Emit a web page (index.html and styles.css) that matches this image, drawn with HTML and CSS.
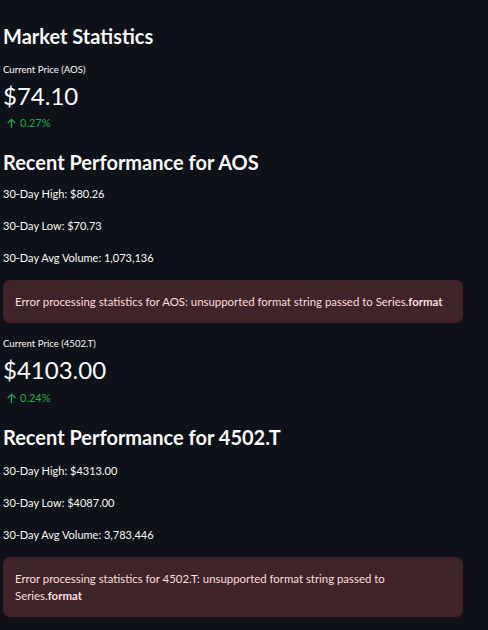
FILE: index.html
```html
<!DOCTYPE html>
<html>
<head>
<meta charset="utf-8">
<link rel="stylesheet" href="styles.css">
</head>
<body>
<main class="page">
  <h2 class="title">Market Statistics</h2>

  <section class="metric">
    <div class="metric-label">Current Price (AOS)</div>
    <div class="metric-value">$74.10</div>
    <div class="metric-delta"><svg class="arrow" viewBox="0 0 12 12" width="11" height="11"><path d="M6 11V1.5M1.8 5.6L6 1.4l4.2 4.2" fill="none" stroke="currentColor" stroke-width="1.4"/></svg><span>0.27%</span></div>
  </section>

  <h3 class="subtitle">Recent Performance for AOS</h3>
  <div class="stats">
    <p class="stat">30-Day High: $80.26</p>
    <p class="stat">30-Day Low: $70.73</p>
    <p class="stat">30-Day Avg Volume: 1,073,136</p>
  </div>

  <div class="alert">Error processing statistics for AOS: unsupported format string passed to <span class="nowrap">Series.<strong>format</strong></span></div>

  <section class="metric metric-after">
    <div class="metric-label">Current Price (4502.T)</div>
    <div class="metric-value">$4103.00</div>
    <div class="metric-delta"><svg class="arrow" viewBox="0 0 12 12" width="11" height="11"><path d="M6 11V1.5M1.8 5.6L6 1.4l4.2 4.2" fill="none" stroke="currentColor" stroke-width="1.4"/></svg><span>0.24%</span></div>
  </section>

  <h3 class="subtitle">Recent Performance for 4502.T</h3>
  <div class="stats stats-after">
    <p class="stat">30-Day High: $4313.00</p>
    <p class="stat">30-Day Low: $4087.00</p>
    <p class="stat">30-Day Avg Volume: 3,783,446</p>
  </div>

  <div class="alert">Error processing statistics for 4502.T: unsupported format string passed to <span class="nowrap">Series.<strong>format</strong></span></div>
</main>
</body>
</html>
```

FILE: styles.css
```css
html, body {
  margin: 0;
  padding: 0;
  background: #0e1117;
}
body {
  font-family: "Lato", "Open Sans", sans-serif;
  color: #fafafa;
}
.page {
  width: 460px;
  padding: 24px 0 0 3px;
  display: flex;
  flex-direction: column;
}
.title {
  margin: 0;
  font-size: 20px;
  font-weight: 700;
  line-height: 24px;
}
.metric {
  display: flex;
  flex-direction: column;
}
.metric-label {
  font-size: 9.6px;
  line-height: 14px;
  margin-top: 15px;
}
.metric-after .metric-label {
  margin-top: 14px;
}
.metric-value {
  font-size: 24px;
  line-height: 30px;
  margin-top: 4px;
}
.metric-delta {
  display: flex;
  align-items: center;
  gap: 3px;
  color: #1fae4a;
  font-size: 11px;
  line-height: 14px;
  margin-top: 5px;
  padding-left: 3px;
}
.metric-after .metric-delta {
  margin-top: 6px;
}
.subtitle {
  margin: 20px 0 0;
  font-size: 20px;
  font-weight: 700;
  line-height: 24px;
}
.stats {
  display: flex;
  flex-direction: column;
  gap: 16px;
  margin-top: 12px;
}
.stats-after {
  margin-top: 14px;
}
.stat {
  margin: 0;
  font-size: 11px;
  line-height: 16px;
}
.alert {
  margin-top: 14px;
  background: #3e2328;
  color: #ffdede;
  border-radius: 7px;
  padding: 13px 12px;
  font-size: 11.4px;
  line-height: 17px;
  width: 436px;
}
.alert strong {
  font-weight: 700;
}
.nowrap {
  white-space: nowrap;
}
```
